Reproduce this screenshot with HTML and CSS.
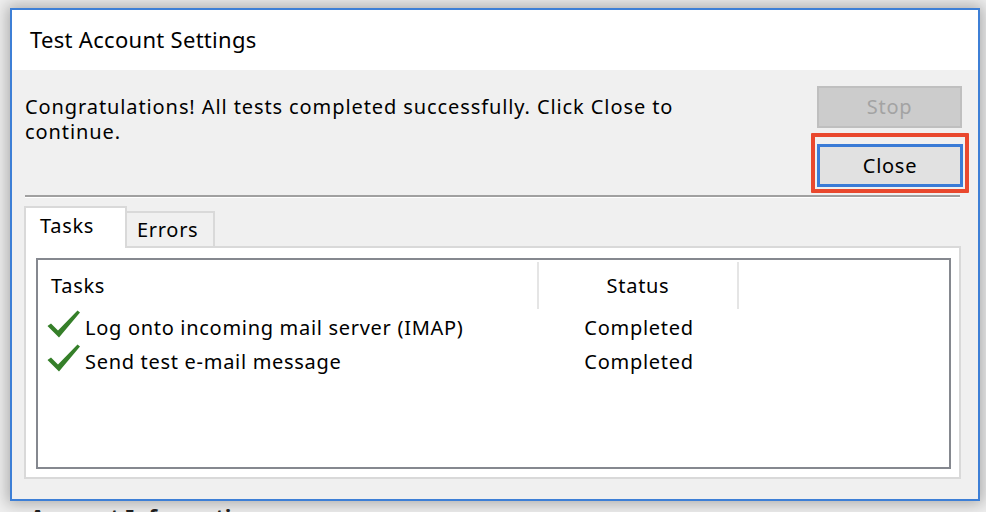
FILE: index.html
```html
<!DOCTYPE html>
<html>
<head>
<meta charset="utf-8">
<link rel="stylesheet" href="styles.css">
</head>
<body>
<div class="desktop">
  <div class="bg-rule"></div>
  <div class="bg-heading">Account Information</div>
</div>
<div class="dialog">
  <div class="titlebar">Test Account Settings</div>
  <div class="content">
    <div class="toprow">
      <div class="message">Congratulations! All tests completed successfully. Click Close to continue.</div>
      <div class="buttons">
        <div class="btn btn-stop">Stop</div>
        <div class="btn btn-close">Close<span class="highlight"></span></div>
      </div>
    </div>
    <div class="separator"></div>
    <div class="tabs">
      <div class="tabstrip">
        <div class="tab tab-active">Tasks</div>
        <div class="tab tab-inactive">Errors</div>
      </div>
      <div class="panel">
        <div class="listview">
          <div class="lv-header">
            <div class="hcell hcell-task">Tasks</div>
            <div class="hcell hcell-status">Status</div>
            <div class="hcell hcell-empty"></div>
          </div>
          <div class="lv-row">
            <div class="cell-task">
              <svg class="check" viewBox="0 0 35 30" width="35" height="30"><path d="M1.5 17 L5 14.5 L12 21.5 L31.5 1.5 L34 3.5 L13 28.5 Z" fill="#357f29"/></svg>
              <span>Log onto incoming mail server (IMAP)</span>
            </div>
            <div class="cell-status">Completed</div>
            <div></div>
          </div>
          <div class="lv-row">
            <div class="cell-task">
              <svg class="check" viewBox="0 0 35 30" width="35" height="30"><path d="M1.5 17 L5 14.5 L12 21.5 L31.5 1.5 L34 3.5 L13 28.5 Z" fill="#357f29"/></svg>
              <span>Send test e-mail message</span>
            </div>
            <div class="cell-status">Completed</div>
            <div></div>
          </div>
        </div>
      </div>
    </div>
  </div>
</div>
</body>
</html>
```
FILE: styles.css
```css
html, body {
  margin: 0;
  padding: 0;
}
body {
  width: 986px;
  height: 512px;
  overflow: hidden;
  background: #efefef;
  font-family: "Noto Sans", "Open Sans", sans-serif;
  color: #000;
  position: relative;
}
.desktop {
  height: 512px;
  display: flex;
  flex-direction: column;
}
.bg-rule {
  margin-top: 124px;
  height: 2px;
  background: #a8a8a8;
}
.bg-heading {
  margin-top: 377px;
  margin-left: 30px;
  font-size: 22px;
  font-weight: bold;
  color: #222;
  line-height: 30px;
}
.dialog {
  position: absolute;
  left: 10px;
  top: 8px;
  width: 970px;
  height: 493px;
  box-sizing: border-box;
  border: 2px solid #3d7fd6;
  background: #f0f0f0;
  box-shadow: 0 0 14px 3px rgba(0,0,0,0.28);
  display: flex;
  flex-direction: column;
}
.titlebar {
  height: 60px;
  background: #fff;
  box-sizing: border-box;
  padding-left: 18px;
  padding-top: 14px;
  font-size: 22px;
  letter-spacing: 0.3px;
  line-height: 30px;
}
.content {
  flex: 1;
  padding: 16px 15px 0 13px;
  font-size: 20px;
  letter-spacing: 0.7px;
  line-height: 25px;
}
.toprow {
  display: flex;
  align-items: flex-start;
}
.message {
  flex: 1;
  margin-top: 8px;
  padding-right: 110px;
  letter-spacing: 0.9px;
}
.buttons {
  width: 146px;
  display: flex;
  flex-direction: column;
}
.btn {
  box-sizing: border-box;
  text-align: center;
  position: relative;
}
.btn-stop {
  width: 145px;
  height: 42px;
  background: #cccccc;
  border: 2px solid #bfbfbf;
  color: #a3a3a3;
  line-height: 38px;
}
.btn-close {
  margin-top: 16px;
  height: 43px;
  background: #e1e1e1;
  border: 3px solid #3a7bd6;
  line-height: 37px;
}
.highlight {
  position: absolute;
  left: -9px;
  top: -14px;
  right: -9px;
  bottom: -9px;
  border: 4px solid #e9482e;
  border-radius: 1px;
}
.separator {
  margin-top: 8px;
  margin-right: 3px;
  height: 0;
  border-top: 2px solid #a0a0a0;
  border-bottom: 1px solid #ffffff;
}
.tabs {
  margin-top: 8px;
  margin-left: -1px;
  margin-right: 2px;
}
.tabstrip {
  display: flex;
  align-items: flex-end;
  height: 42px;
  margin-bottom: -2px;
  position: relative;
  z-index: 1;
}
.tab {
  box-sizing: border-box;
  border: 2px solid #d9d9d9;
  border-bottom: none;
}
.tab-active {
  width: 103px;
  height: 42px;
  background: #fff;
  padding-left: 14px;
  padding-top: 5px;
}
.tab-inactive {
  width: 88px;
  border-left: none;
  background: #f0f0f0;
  padding-left: 10px;
  padding-top: 4px;
  margin-bottom: 2px;
  height: 35px;
}
.panel {
  height: 233px;
  box-sizing: border-box;
  border: 2px solid #d9d9d9;
  background: #fff;
  padding: 10px 8px 8px 10px;
}
.listview {
  height: 211px;
  box-sizing: border-box;
  border: 2px solid #85888f;
}
.lv-header {
  display: grid;
  grid-template-columns: 501px 200px 1fr;
  height: 49px;
}
.hcell {
  margin-top: 2px;
  box-sizing: border-box;
  padding-top: 11px;
}
.hcell-task {
  padding-left: 13px;
  border-right: 2px solid #e5e5e5;
}
.hcell-status {
  text-align: center;
  border-right: 2px solid #e5e5e5;
}
.lv-row {
  display: grid;
  grid-template-columns: 501px 200px 1fr;
  height: 34px;
  line-height: 30px;
}
.cell-task {
  display: flex;
  align-items: flex-start;
  padding-left: 8px;
}
.cell-task span {
  padding-top: 4px;
  margin-left: 4px;
}
.check {
  display: block;
  flex: none;
}
.cell-status {
  text-align: center;
  padding-top: 4px;
}
```
